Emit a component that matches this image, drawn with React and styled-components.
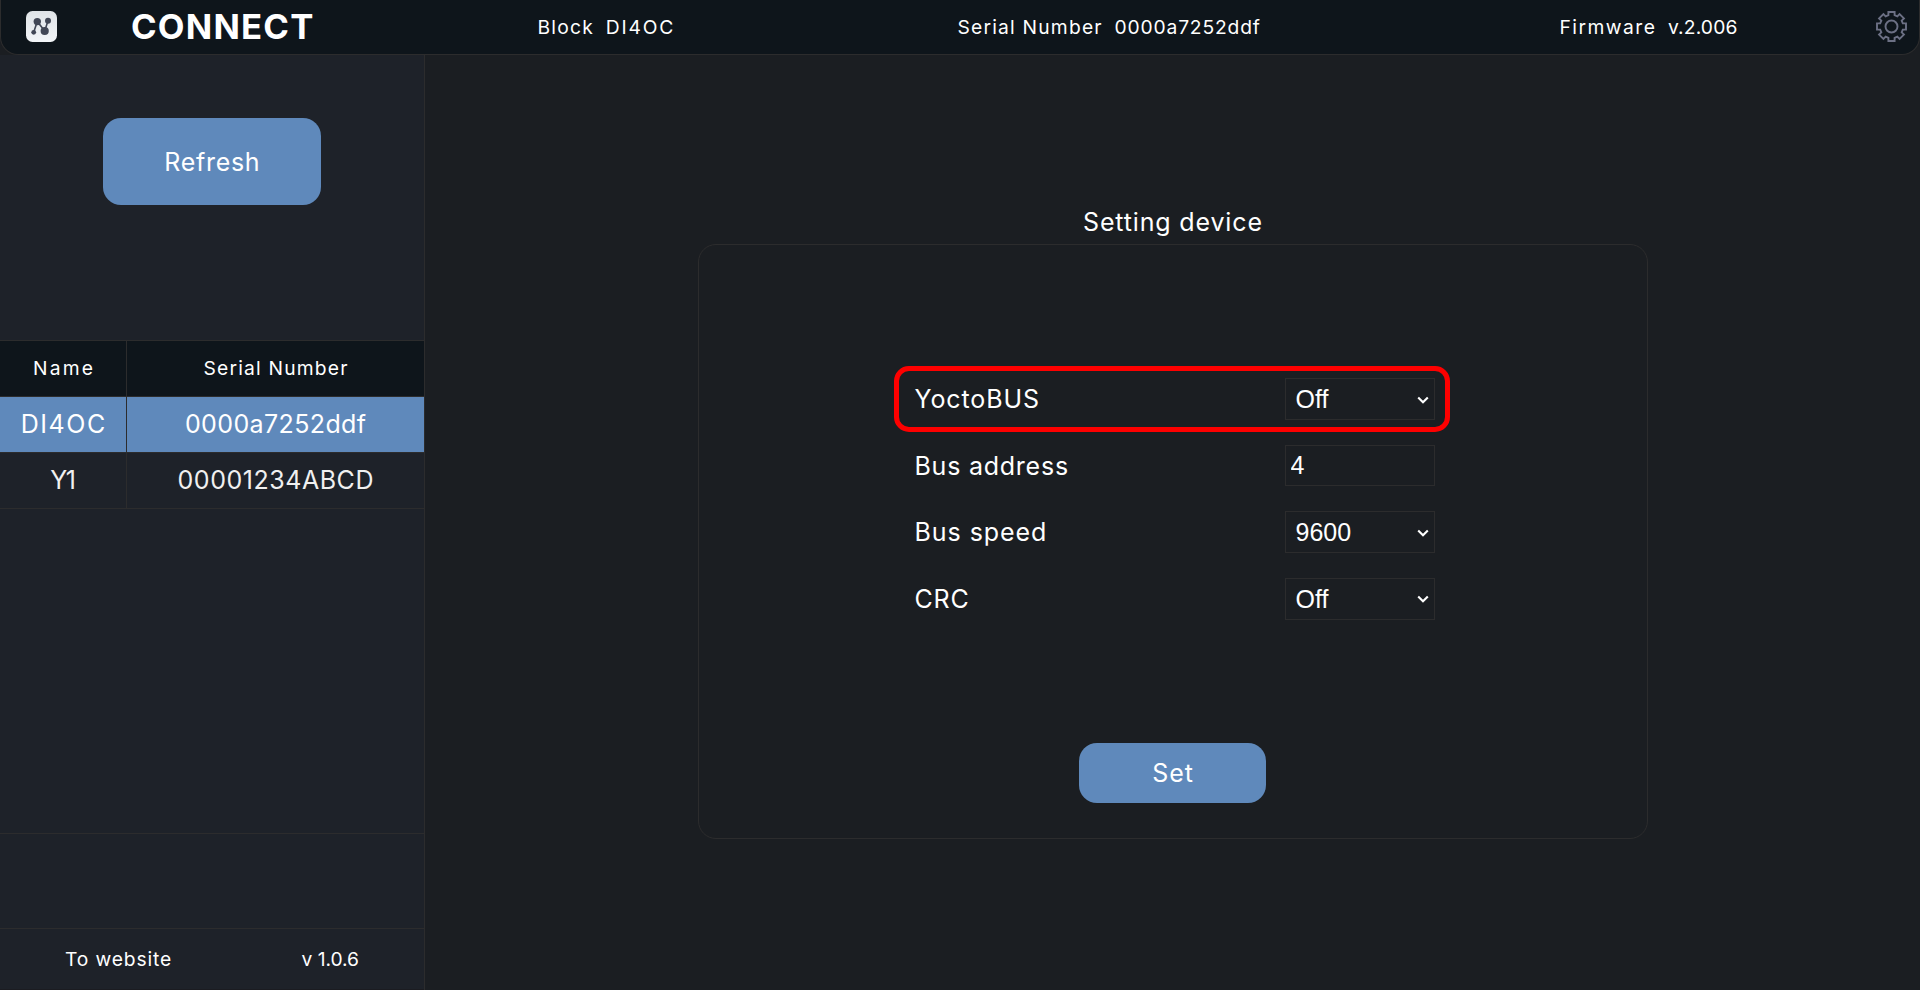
import React from 'react';
import styled, { createGlobalStyle } from 'styled-components';

const line = '#2c2c2d';
const blue = '#5f89bb';

const GlobalStyle = createGlobalStyle`
  * { box-sizing: border-box; }
  html, body, #root { height: 100%; }
  body {
    margin: 0;
    overflow: hidden;
    background: #1b1e22;
    color: #fff;
    font-family: Inter, "Liberation Sans", sans-serif;
  }
`;

const Page = styled.div`
  display: flex;
  flex-direction: column;
  height: 100%;
`;

/* Tracked text; the negative margin drops the space after the last letter. */
const Label = styled.span`
  display: inline-block;
  font-size: ${(p) => (p.$small ? 19.25 : 25)}px;
  line-height: 30px;
  white-space: pre;
  letter-spacing: ${(p) => p.$track || 0}px;
  margin-right: ${(p) => -(p.$track || 0)}px;
`;

const Header = styled.header`
  display: grid;
  grid-template-columns: 105px 406.5px 420px 602px 316.5px 31px;
  align-items: center;
  flex: none;
  height: 55px;
  padding: 0 0 1px 25px;
  background: #0e151b;
  border: 1px solid ${line};
  border-top: 0;
  border-radius: 0 0 18px 18px;
`;

const Brand = styled.h1`
  margin: 0;
  padding-bottom: 2px;
  font-size: 34.7px;
  line-height: 42px;
  font-weight: 700;
  letter-spacing: 1.2px;
`;

const Info = styled.div`
  display: flex;
  gap: 13px;
`;

const Icon = styled.svg`
  display: block;
  width: 31px;
  height: 31px;
`;

const Body = styled.div`
  display: flex;
  flex: 1;
  min-height: 0;
`;

const Sidebar = styled.aside`
  display: flex;
  flex-direction: column;
  flex: none;
  width: 425px;
  background: #1e2229;
  border-right: 1px solid ${line};
`;

const Button = styled.button`
  width: ${(p) => p.$w}px;
  height: ${(p) => p.$h}px;
  padding: 0;
  border: 0;
  border-radius: 18px;
  background: ${blue};
  color: #fff;
  font-family: inherit;
`;

const RefreshArea = styled.div`
  display: flex;
  justify-content: center;
  align-items: flex-start;
  height: 285px;
  padding-top: 63px;
`;

const Table = styled.div`
  flex: 1;
  border-top: 1px solid ${line};
`;

const TableRow = styled.div`
  display: grid;
  grid-template-columns: 127px 1fr;
  height: 56px;
  background: ${(p) => p.$bg || 'transparent'};
  color: ${(p) => p.$color || '#fff'};
  border-bottom: 1px solid ${line};
`;

const Cell = styled.div`
  display: flex;
  align-items: center;
  justify-content: center;
  padding-bottom: 2px;
  &:first-child { border-right: 1px solid ${line}; }
`;

const Spacer = styled.div`
  height: 95px;
  border-top: 1px solid ${line};
`;

const Footer = styled.footer`
  display: flex;
  justify-content: space-between;
  height: 62px;
  padding: 15px 65px 0 65px;
  border-top: 1px solid ${line};
  border-bottom: 1px solid #1b1c21;
`;

const Main = styled.main`
  flex: 1;
  display: flex;
  flex-direction: column;
  align-items: center;
  padding: 152px 0 0 1px;
`;

const Title = styled.h2`
  margin: 0;
  height: 37px;
  padding-right: 1px;
  font-weight: 400;
  line-height: 30px;
`;

const Panel = styled.section`
  display: flex;
  flex-direction: column;
  align-items: center;
  width: 950px;
  height: 595px;
  padding: 121px 1px 0 0;
  border: 1px solid ${line};
  border-radius: 18px;
`;

const Fields = styled.div`
  width: 520px;
  margin: 0 0 111px 4px;
`;

const Field = styled.label`
  position: relative;
  display: flex;
  align-items: center;
  justify-content: space-between;
  height: 66.5px;
`;

const Highlight = styled.div`
  position: absolute;
  top: 0;
  left: -21px;
  right: -15px;
  height: 66px;
  border: 5px solid #fe0000;
  border-radius: 15px;
  pointer-events: none;
`;

const controlStyle = `
  width: 150px;
  margin: 0;
  border: 1px solid ${line};
  border-radius: 0;
  outline: 0;
  background: transparent;
  color: #fff;
  font-family: "Liberation Sans", Arial, sans-serif;
  font-size: 25px;
`;

const SelectBox = styled.div`
  position: relative;
  height: 42px;
`;

const Select = styled.select`
  ${controlStyle}
  display: block;
  appearance: none;
  height: 42px;
  padding: 0 24px 0 10px;
`;

const Chevron = styled.svg`
  position: absolute;
  top: 17.5px;
  right: 6px;
  width: 12px;
  height: 8px;
  pointer-events: none;
`;

const Input = styled.input`
  ${controlStyle}
  height: 41px;
  padding: 0 5px;
`;

const gearPath = (() => {
  const points = [];
  for (let i = 0; i < 8; i += 1) {
    const a = (i * Math.PI) / 4;
    [[11.3, -3.1], [14.5, -3.1], [14.5, 3.1], [11.3, 3.1]].forEach(([r, t]) => {
      const x = 15.5 + r * Math.cos(a) - t * Math.sin(a);
      const y = 15.5 + r * Math.sin(a) + t * Math.cos(a);
      points.push(`${x.toFixed(2)} ${y.toFixed(2)}`);
    });
  }
  return `M${points.join('L')}Z`;
})();

const Logo = () => (
  <Icon viewBox="0 0 31 31">
    <defs>
      <linearGradient id="tile" x1="0" y1="0" x2="0" y2="1">
        <stop offset="0" stopColor="#dfe3e7" />
        <stop offset="1" stopColor="#f3f5f8" />
      </linearGradient>
    </defs>
    <rect width="31" height="31" rx="6.5" fill="url(#tile)" />
    <g fill="#424756">
      <path d="M7.7 21.3 11.3 10.5 18.7 20 22 9.8" fill="none" stroke="#424756" strokeWidth="1.6" />
      <circle cx="11.3" cy="10.6" r="3.7" />
      <circle cx="22" cy="9.8" r="3" />
      <circle cx="18.7" cy="20" r="4.1" />
      <circle cx="7.7" cy="21.3" r="2.4" />
    </g>
  </Icon>
);

const Gear = () => (
  <Icon viewBox="0 0 31 31" fill="none" stroke="#6c7084" strokeWidth="1.9">
    <path d={gearPath} />
    <circle cx="15.5" cy="15.5" r="6" />
  </Icon>
);

const SelectField = ({ label, track, value, highlighted }) => (
  <Field>
    <Label $track={track}>{label}</Label>
    <SelectBox>
      <Select defaultValue={value}>
        <option>{value}</option>
      </Select>
      <Chevron viewBox="0 0 12 8" fill="none" stroke="#fff" strokeWidth="2.1">
        <path d="M1.2 1.4 6 6.2 10.8 1.4" />
      </Chevron>
    </SelectBox>
    {highlighted && <Highlight />}
  </Field>
);

export default function App() {
  return (
    <Page>
      <GlobalStyle />
      <Header>
        <Logo />
        <Brand>CONNECT</Brand>
        <Info>
          <Label $small $track={1.23}>Block</Label>
          <Label $small $track={1.8}>DI4OC</Label>
        </Info>
        <Info>
          <Label $small $track={1.2}>Serial Number</Label>
          <Label $small $track={0.83}>0000a7252ddf</Label>
        </Info>
        <Info>
          <Label $small $track={1.47}>Firmware</Label>
          <Label $small $track={0.15}>v.2.006</Label>
        </Info>
        <Gear />
      </Header>
      <Body>
        <Sidebar>
          <RefreshArea>
            <Button $w={218} $h={87}><Label $track={0.7}>Refresh</Label></Button>
          </RefreshArea>
          <Table>
            <TableRow $bg="#0e151b">
              <Cell><Label $small $track={2.2}>Name</Label></Cell>
              <Cell><Label $small $track={1.2}>Serial Number</Label></Cell>
            </TableRow>
            <TableRow $bg={blue}>
              <Cell><Label $track={1.6}>DI4OC</Label></Cell>
              <Cell><Label $track={0.39}>0000a7252ddf</Label></Cell>
            </TableRow>
            <TableRow $color="#f0f0f0">
              <Cell><Label $track={-1.48}>Y1</Label></Cell>
              <Cell><Label $track={0.54}>00001234ABCD</Label></Cell>
            </TableRow>
          </Table>
          <Spacer />
          <Footer>
            <Label $small $track={0.86}>To website</Label>
            <Label $small $track={-0.06}>v 1.0.6</Label>
          </Footer>
        </Sidebar>
        <Main>
          <Title><Label $track={0.85}>Setting device</Label></Title>
          <Panel>
            <Fields>
              <SelectField label="YoctoBUS" track={0.89} value="Off" highlighted />
              <Field>
                <Label $track={0.76}>Bus address</Label>
                <Input defaultValue="4" />
              </Field>
              <SelectField label="Bus speed" track={0.94} value="9600" />
              <SelectField label="CRC" track={0.81} value="Off" />
            </Fields>
            <Button $w={187} $h={60}><Label $track={0.93}>Set</Label></Button>
          </Panel>
        </Main>
      </Body>
    </Page>
  );
}
